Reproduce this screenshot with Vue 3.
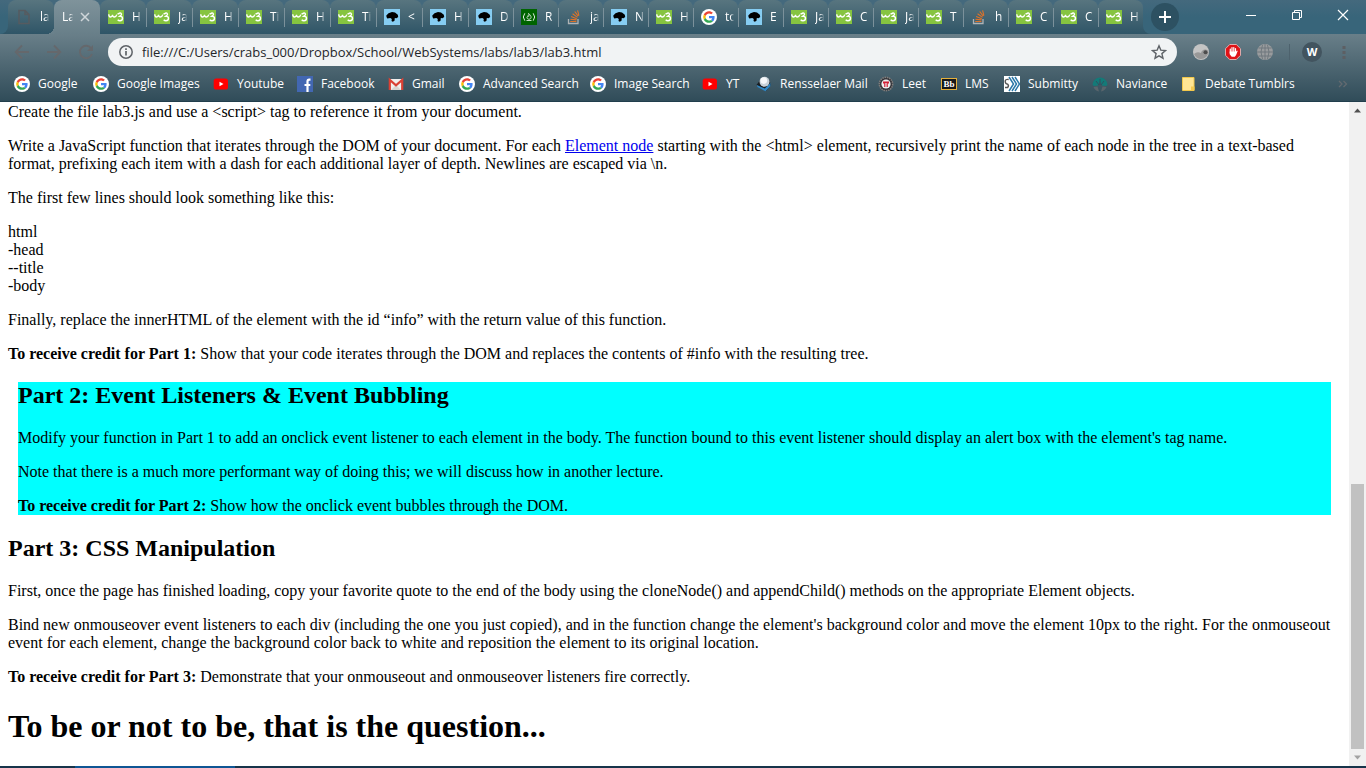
<script setup>
import { ref } from 'vue'

const url = ref('file:///C:/Users/crabs_000/Dropbox/School/WebSystems/labs/lab3/lab3.html')

const tabs = [
  { icon: 'file', title: 'la' },
  { icon: '', title: 'La', active: true },
  { icon: 'w3', title: 'H' },
  { icon: 'w3', title: 'Ja' },
  { icon: 'w3', title: 'H' },
  { icon: 'w3', title: 'Ti' },
  { icon: 'w3', title: 'H' },
  { icon: 'w3', title: 'Ti' },
  { icon: 'dino', title: '<' },
  { icon: 'dino', title: 'H' },
  { icon: 'dino', title: 'D' },
  { icon: 'fcc', title: 'R' },
  { icon: 'stack', title: 'ja' },
  { icon: 'dino', title: 'N' },
  { icon: 'w3', title: 'H' },
  { icon: 'google', title: 'to' },
  { icon: 'dino', title: 'E' },
  { icon: 'w3', title: 'Ja' },
  { icon: 'w3', title: 'C' },
  { icon: 'w3', title: 'Ja' },
  { icon: 'w3', title: 'T' },
  { icon: 'stack', title: 'h' },
  { icon: 'w3', title: 'C' },
  { icon: 'w3', title: 'C' },
  { icon: 'w3', title: 'H' }
]

const bookmarks = [
  { icon: 'google', label: 'Google', width: 79 },
  { icon: 'google', label: 'Google Images', width: 120 },
  { icon: 'youtube', label: 'Youtube', width: 84 },
  { icon: 'facebook', label: 'Facebook', width: 91 },
  { icon: 'gmail', label: 'Gmail', width: 71 },
  { icon: 'google', label: 'Advanced Search', width: 131 },
  { icon: 'google', label: 'Image Search', width: 112 },
  { icon: 'youtube', label: 'YT', width: 54 },
  { icon: 'mail', label: 'Rensselaer Mail', width: 122 },
  { icon: 'leet', label: 'Leet', width: 63 },
  { icon: 'lms', label: 'LMS', width: 63 },
  { icon: 'submitty', label: 'Submitty', width: 88 },
  { icon: 'naviance', label: 'Naviance', width: 89 },
  { icon: 'folder', label: 'Debate Tumblrs', width: 120 }
]
</script>

<template>
  <div class="window">
    <svg class="defs" aria-hidden="true">
      <symbol id="i-file" viewBox="0 0 16 16">
        <path d="M3 1.500h6l4 4v9H3zM9 1.500v4h4" fill="none" stroke="#565b60" stroke-width="1.500" />
      </symbol>
      <symbol id="i-w3" viewBox="0 0 16 16">
        <rect y="1" width="16" height="14" fill="#86c440" />
        <path d="M.8 5.300q0 2.700 1.700 2.700t2-2.200q.1 2.200 1.900 2.200T8.800 5.700" fill="none" stroke="#fff" stroke-width="1.300" />
        <path d="M9.500 4.800h1.200q1-1.200 2.200-.6Q14 5 13 6.200l-1.200 1q2.500-.2 2.700 1.900-.1 2.600-2.500 2.700-1.500 0-2.300-1" fill="none" stroke="#fff" stroke-width="1.400" />
      </symbol>
      <symbol id="i-dino" viewBox="0 0 16 16">
        <rect width="16" height="16" fill="#86cdf2" />
        <path d="M2.300 6.500 4.500 4.300 8 3l3 .5 2.800 2.200.4 2.300-1.700 1.300-1.700-.2-.3 2.700-1.700 1-1.300-.7.300-2-1.500-1-3 .3L2.500 8z" fill="#000" />
      </symbol>
      <symbol id="i-fcc" viewBox="0 0 16 16">
        <rect width="16" height="16" fill="#006400" />
        <path d="M3.800 4.300Q.8 8 3.800 11.700M12.200 4.300q3 3.700 0 7.400" fill="none" stroke="#dfeadf" />
        <path d="M7.500 4.500c2 1.500 2.700 2.700 2.500 4.200-.2 1-1 1.500-2 1.500s-2-.6-2-1.700c.1-.9.900-1.200.9-2l.9.900c.4-.9.200-1.800-.3-2.900M5.500 11.500h5" fill="none" stroke="#dfeadf" stroke-width=".9" />
      </symbol>
      <symbol id="i-stack" viewBox="0 0 16 16">
        <path d="M2.500 10v4.500h9.500V10" fill="none" stroke="#aeb3b6" stroke-width="1.300" />
        <path d="M4.200 12.500h6.200M4.400 10.200l6.100.7M5.100 7.600l5.700 2.100M6.600 4.700l4.900 3.700M8.700 2.500l3.500 4.700M11.600 1.300l1.300 5.300" stroke="#e07328" stroke-width="1.100" />
      </symbol>
      <symbol id="i-google" viewBox="0 0 48 48">
        <circle cx="24" cy="24" r="24" fill="#fff" />
        <g transform="translate(6.500 6.500) scale(.73)">
          <path fill="#EA4335" d="M24 9.500c3.540 0 6.710 1.220 9.210 3.600l6.850-6.850C35.900 2.380 30.470 0 24 0 14.620 0 6.510 5.380 2.560 13.220l7.980 6.190C12.430 13.720 17.740 9.500 24 9.500z" />
          <path fill="#4285F4" d="M46.980 24.550c0-1.570-.15-3.090-.38-4.550H24v9.020h12.940c-.58 2.960-2.260 5.480-4.780 7.180l7.730 6c4.510-4.180 7.090-10.360 7.090-17.650z" />
          <path fill="#FBBC05" d="M10.530 28.590A14.500 14.500 0 0 1 10.530 19.410l-7.980-6.190a24 24 0 0 0 0 21.560z" />
          <path fill="#34A853" d="M24 48c6.480 0 11.930-2.130 15.890-5.810l-7.730-6c-2.150 1.450-4.920 2.300-8.160 2.300-6.260 0-11.570-4.220-13.470-9.910l-7.980 6.190C6.510 42.620 14.620 48 24 48z" />
        </g>
      </symbol>
      <symbol id="i-youtube" viewBox="0 0 16 16">
        <rect x=".7" y="2.500" width="14.300" height="11" rx="2.600" fill="#f00" />
        <path d="m6.500 5.700 4 2.300-4 2.300z" fill="#fff" />
      </symbol>
      <symbol id="i-facebook" viewBox="0 0 16 16">
        <rect width="16" height="16" fill="#4267b2" />
        <path d="M13.500 3.700h-1.300q-1.700 0-1.700 1.800V16M7.500 9h5.800" fill="none" stroke="#fff" stroke-width="2.200" />
      </symbol>
      <symbol id="i-gmail" viewBox="0 0 16 16">
        <path d="M1 3h14v11H1z" fill="#f1efed" />
        <path d="M3 14l5-5 5 5z" fill="#d8d4d1" />
        <path d="M1.800 14V4L8 9.300 14.200 4v10" fill="none" stroke="#da4034" stroke-width="2.200" />
      </symbol>
      <symbol id="i-mail" viewBox="0 0 16 16">
        <path d="M.5 9 5 3l8 .5L15 9l-5 6z" fill="#1a1d20" />
        <path d="m.8 9 8 3.500L14.500 7v3L9.500 15.300 1.500 11z" fill="#3187c4" />
        <circle cx="8.500" cy="5.800" r="5" fill="#c9d2d9" />
        <circle cx="7.800" cy="4.600" r="3.300" fill="#f6f8fa" />
      </symbol>
      <symbol id="i-leet" viewBox="0 0 16 16">
        <circle cx="8" cy="8" r="6.700" fill="#35353a" stroke="#807d7b" stroke-width="1.500" stroke-dasharray="1.500 .8" />
        <circle cx="8" cy="8" r="4.600" fill="#eee" />
        <path d="M5 5.500h6v2H9.800V11H8.600V7H7.400v4H6.200V7.500H5z" fill="#d31f35" />
      </symbol>
      <symbol id="i-lms" viewBox="0 0 16 16">
        <rect x=".5" y="2.500" width="15" height="11" fill="#17191b" stroke="#e6b13c" />
        <text x="8" y="11.300" text-anchor="middle" font-family="Liberation Serif, serif" font-weight="bold" font-size="9" fill="#fff">Bb</text>
      </symbol>
      <symbol id="i-submitty" viewBox="0 0 16 16">
        <rect width="16" height="16" fill="#fff" />
        <path d="M4.700 3.500Q1 3 1.200 5.500t2.500 2.700q1.500 1.500 0 3.300H1" fill="none" stroke="#555" stroke-width="1.400" />
        <path d="m5 1 4.500 7L5 15M8 1l4.500 7L8 15M11 1l4.500 7-4.500 7" fill="none" stroke="#2b78a8" stroke-width="1.500" />
      </symbol>
      <symbol id="i-naviance" viewBox="0 0 16 16">
        <path d="M.5 9a7.500 7.500 0 1 1 15 0l-1.500 1-4-.5L8 5 6 9.500 2 10z" fill="#137a78" />
        <path d="M8 3v6M4 5l3 4M12 5 9 9" stroke="#2e5260" />
        <path d="m1.500 11 4-.5L7 15.500q-4-.8-5.500-4.500M14.500 11l-4-.5L9 15.500q4-.8 5.500-4.500" fill="#59656c" />
      </symbol>
      <symbol id="i-folder" viewBox="0 0 16 16">
        <path d="M1.500 1.500h11.500v13H1.500z" fill="#ffe694" stroke="#f2c84b" />
        <path d="M10 10.500h3.500v4H10z" fill="#f4ca4f" />
      </symbol>
    </svg>

    <header class="chrome">
      <div class="strip">
        <div class="edge-left"></div>
        <div class="tabs">
          <div v-for="(tab, i) in tabs" :key="i" class="tab" :class="{ active: tab.active, wide: i < 10, ruled: i > 2 }">
            <svg v-if="tab.icon" class="icon"><use :href="'#i-' + tab.icon" /></svg>
            <span class="title">{{ tab.title }}</span>
            <button v-if="tab.active" class="close" type="button" aria-label="Close tab">
              <svg viewBox="0 0 10 10"><path d="m1 1 8 8M9 1 1 9" stroke="#cfd6da" stroke-width="1.500" /></svg>
            </button>
          </div>
        </div>
        <div class="edge-right">
          <button class="new-tab" type="button" aria-label="New tab">
            <svg viewBox="0 0 28 28"><path d="M14 8v12M8 14h12" stroke="#fff" stroke-width="2" /></svg>
          </button>
          <div class="controls">
            <button type="button" aria-label="Minimize">
              <svg viewBox="0 0 12 12"><path d="M1 6.500h10" stroke="#fff" /></svg>
            </button>
            <button type="button" aria-label="Restore">
              <svg viewBox="0 0 12 12"><path d="M1.500 3.500h7v7h-7zM3.500 3.500v-2h7v7h-2" fill="none" stroke="#fff" /></svg>
            </button>
            <button type="button" aria-label="Close">
              <svg viewBox="0 0 12 12"><path d="m1 1 10 10M11 1 1 11" stroke="#fff" stroke-width="1.200" /></svg>
            </button>
          </div>
        </div>
      </div>

      <div class="lower">
        <div class="toolbar">
          <div class="nav">
            <button type="button" aria-label="Back">
              <svg viewBox="0 0 16 16"><path d="M15 8H2M8 1.500 1.700 8 8 14.500" fill="none" stroke="#65686c" stroke-width="1.900" /></svg>
            </button>
            <button type="button" aria-label="Forward">
              <svg viewBox="0 0 16 16"><path d="M1 8h13M8 1.500 14.300 8 8 14.500" fill="none" stroke="#65686c" stroke-width="1.900" /></svg>
            </button>
            <button type="button" aria-label="Reload">
              <svg viewBox="0 0 16 16"><path d="M13.300 4.500A6.200 6.200 0 1 0 14 10" fill="none" stroke="#65686c" stroke-width="1.900" /><path d="M15 1v6H9z" fill="#65686c" /></svg>
            </button>
          </div>
          <div class="omnibox">
            <svg class="icon" viewBox="0 0 16 16"><circle cx="8" cy="8" r="6.200" fill="none" stroke="#5f6368" stroke-width="1.500" /><path d="M8 7v4.500M8 4.300v1.600" stroke="#5f6368" stroke-width="1.700" /></svg>
            <input v-model="url" type="text" aria-label="Address" spellcheck="false" />
            <button type="button" aria-label="Bookmark this page">
              <svg viewBox="0 0 16 16"><path d="m8 1.800 1.800 4.300 4.700.4-3.600 3.100 1.100 4.600L8 11.800l-4 2.400 1.100-4.600-3.600-3.100 4.700-.4z" fill="none" stroke="#5f6368" stroke-width="1.400" /></svg>
            </button>
          </div>
          <div class="extensions">
            <button type="button" aria-label="Cloud extension">
              <svg viewBox="0 0 16 16"><circle cx="8" cy="8" r="8" fill="#c4c4c4" /><path d="M1 10q3-3 7-1 1-4 5-3.500 2.500.7 2.500 3Q14 15 8 15 3 15 1 10" fill="#989898" /><circle cx="12.500" cy="8.300" r="2" fill="#4c4c4c" /></svg>
            </button>
            <button type="button" aria-label="Ad blocker">
              <svg viewBox="0 0 16 16"><path d="M4.700.5h6.600l4.200 4.200v6.600l-4.200 4.200H4.700L.5 11.300V4.700z" fill="#e01217" stroke="#efc4c4" stroke-width=".8" /><path d="M5.300 9V5M7 8V3.500M8.800 8V3.500M10.500 9V4.500" stroke="#fff" stroke-width="1.200" stroke-linecap="round" /><path d="M4.700 7.500h6.400l.9-1 .7.600-1.600 3.900-1.300 1.800H6.700l-2-2.500z" fill="#fff" /></svg>
            </button>
            <button type="button" aria-label="Globe extension">
              <svg viewBox="0 0 16 16"><circle cx="8" cy="8" r="8" fill="#999c9e" /><path d="M8 0v16M0 8h16M1.500 4h13M1.500 12h13M5.500 1Q2.500 8 5.500 15M10.500 1q3 7 0 14" fill="none" stroke="#6b757b" stroke-width=".9" /></svg>
            </button>
          </div>
          <span class="divider"></span>
          <button class="profile" type="button">W</button>
          <button class="menu" type="button" aria-label="Menu">
            <svg viewBox="0 0 4 14"><path d="M.5 1h3v3h-3zM.5 6h3v3h-3zM.5 11h3v3h-3z" fill="#5d5f63" /></svg>
          </button>
        </div>

        <nav class="bookmarks">
          <a v-for="(b, i) in bookmarks" :key="i" href="#" :style="{ flexBasis: b.width + 'px' }">
            <svg class="icon"><use :href="'#i-' + b.icon" /></svg>
            <span>{{ b.label }}</span>
          </a>
          <button class="more" type="button" aria-label="More bookmarks">
            <svg viewBox="0 0 10 8"><path d="m1 1 3 3-3 3M5.500 1l3 3-3 3" fill="none" stroke="#626a70" stroke-width="1.300" /></svg>
          </button>
        </nav>
      </div>
    </header>

    <div class="view">
      <main class="page">
        <p>Create the file lab3.js and use a &lt;script&gt; tag to reference it from your document.</p>
        <p>Write a JavaScript function that iterates through the DOM of your document. For each <a href="#">Element node</a> starting with the &lt;html&gt; element, recursively print the name of each node in the tree in a text-based format, prefixing each item with a dash for each additional layer of depth. Newlines are escaped via \n.</p>
        <p>The first few lines should look something like this:</p>
        <p>html<br />-head<br />--title<br />-body</p>
        <p>Finally, replace the innerHTML of the element with the id “info” with the return value of this function.</p>
        <p><b>To receive credit for Part 1:</b> Show that your code iterates through the DOM and replaces the contents of #info with the resulting tree.</p>
        <section class="lit">
          <h2>Part 2: Event Listeners &amp; Event Bubbling</h2>
          <p>Modify your function in Part 1 to add an onclick event listener to each element in the body. The function bound to this event listener should display an alert box with the element's tag name.</p>
          <p>Note that there is a much more performant way of doing this; we will discuss how in another lecture.</p>
          <p><b>To receive credit for Part 2:</b> Show how the onclick event bubbles through the DOM.</p>
        </section>
        <section>
          <h2>Part 3: CSS Manipulation</h2>
          <p>First, once the page has finished loading, copy your favorite quote to the end of the body using the cloneNode() and appendChild() methods on the appropriate Element objects.</p>
          <p>Bind new onmouseover event listeners to each div (including the one you just copied), and in the function change the element's background color and move the element 10px to the right. For the onmouseout event for each element, change the background color back to white and reposition the element to its original location.</p>
          <p><b>To receive credit for Part 3:</b> Demonstrate that your onmouseout and onmouseover listeners fire correctly.</p>
        </section>
        <h1>To be or not to be, that is the question...</h1>
      </main>
      <div class="scrollbar" aria-hidden="true">
        <svg viewBox="0 0 17 17"><path d="M8.500 6.500 12 10.500H5z" fill="#505050" /></svg>
        <div class="track"><div class="thumb"></div></div>
        <svg viewBox="0 0 17 17"><path d="M5 6.500h7l-3.500 4z" fill="#a3a3a3" /></svg>
      </div>
    </div>
    <footer class="taskbar"><span></span></footer>
  </div>
</template>

<style>
body {
  margin: 0;
  overflow: hidden;
}
</style>

<style scoped>
.window {
  display: flex;
  flex-direction: column;
  height: 100vh;
  background: #fff;
}
.defs {
  position: absolute;
  width: 0;
  height: 0;
}
button {
  padding: 0;
  border: 0;
  background: none;
  display: flex;
  align-items: center;
  justify-content: center;
  flex: none;
}
.icon {
  width: 16px;
  height: 16px;
  flex: none;
}
.chrome {
  flex: none;
  font-family: "Open Sans", "Noto Sans", sans-serif;
  font-size: 12px;
  color: #fff;
}
.strip {
  display: flex;
  height: 34px;
  background: linear-gradient(#50717f, #2f5567);
}
.edge-left,
.edge-right {
  background: linear-gradient(#44697d, #38657a 50%, #38657a);
}
.edge-left {
  width: 8px;
  border-bottom-right-radius: 8px;
  flex: none;
}
.edge-right {
  display: flex;
  flex: 1;
  justify-content: space-between;
  padding-left: 8px;
  border-bottom-left-radius: 8px;
}
.tabs {
  display: flex;
  min-width: 0;
  background: #44697d;
}
.tab {
  display: flex;
  align-items: center;
  gap: 8px;
  flex: 0 1 auto;
  width: 45px;
  box-sizing: border-box;
  height: 34px;
  padding: 0 0 0 8px;
  min-width: 0;
  position: relative;
  border-radius: 8px 8px 0 0;
  background: linear-gradient(#58757f, #2f5567);
}
.tab.wide {
  width: 46px;
}
.tab.ruled::before {
  content: "";
  position: absolute;
  left: 0;
  top: 8px;
  width: 1px;
  height: 19px;
  background: #7b919b;
}
.tab.active {
  background: linear-gradient(#7f939b, #687f89);
}
.tab.active::before,
.tab.active::after {
  content: "";
  position: absolute;
  bottom: 0;
  width: 8px;
  height: 8px;
}
.tab.active::before {
  left: -8px;
  background: radial-gradient(circle at 0 0, transparent 8px, #6a818b 8px);
}
.tab.active::after {
  right: -8px;
  background: radial-gradient(circle at 100% 0, transparent 8px, #6a818b 8px);
}
.title {
  flex: 0 0 14px;
  white-space: nowrap;
  line-height: 16px;
  mask-image: linear-gradient(90deg, #000 40%, transparent 65%);
}
.tab.active .title {
  mask-image: linear-gradient(90deg, #000 60%, transparent 80%);
}
.tab.active {
  gap: 4px;
}
.close svg {
  width: 10px;
  height: 10px;
}
.new-tab {
  width: 28px;
  height: 28px;
  margin-top: 3px;
  border-radius: 50%;
  background: #2d5162;
}
.new-tab svg {
  width: 28px;
  height: 28px;
}
.controls {
  display: flex;
  height: 29px;
}
.controls button {
  width: 46px;
}
.controls svg {
  width: 12px;
  height: 12px;
}
.lower {
  border-bottom: 1px solid #213e4c;
  background: linear-gradient(#697f89, #304c59);
}
.toolbar {
  display: flex;
  align-items: center;
  height: 36px;
  padding-right: 20px;
}
.nav {
  display: flex;
  gap: 16px;
  padding: 0 14px;
}
.nav svg,
.extensions svg,
.omnibox svg {
  width: 16px;
  height: 16px;
}
.omnibox {
  display: flex;
  align-items: center;
  gap: 8px;
  flex: 1;
  height: 28px;
  padding: 0 10px;
  border-radius: 14px;
  background: #f1f3f4;
}
.omnibox input {
  flex: 1;
  min-width: 0;
  padding: 0;
  border: 0;
  outline: 0;
  background: none;
  font: 13px/20px "Open Sans", "Noto Sans", sans-serif;
  color: #24262a;
}
.extensions {
  display: flex;
  gap: 16px;
  margin-left: 16px;
}
.divider {
  width: 1px;
  height: 16px;
  margin: 0 12px 0 16px;
  background: #4d626d;
}
.profile {
  width: 20px;
  height: 20px;
  border-radius: 50%;
  background: #42545f;
  color: #fff;
  font: bold 11px/20px "Open Sans", sans-serif;
}
.menu {
  margin-left: 20px;
}
.menu svg {
  width: 4px;
  height: 14px;
}
.bookmarks {
  display: flex;
  align-items: center;
  height: 28px;
  padding: 0 18px 3px 14px;
}
.bookmarks a {
  display: flex;
  align-items: center;
  gap: 8px;
  flex: 0 1 auto;
  color: #fff;
  text-decoration: none;
  white-space: nowrap;
  line-height: 16px;
}
.more {
  margin-left: auto;
}
.more svg {
  width: 10px;
  height: 8px;
}
.view {
  display: flex;
  flex: 1;
  min-height: 0;
}
.page {
  flex: 1;
  min-width: 0;
  overflow: hidden;
  padding: 1px 8px 0;
  font: 16px/18px "Liberation Serif", "Times New Roman", serif;
  color: #000;
}
.page p {
  margin: 0 0 16px;
}
.page a {
  color: #00e;
}
.page h2 {
  margin: 20px 0;
  font-size: 24px;
  line-height: 27px;
}
.page h1 {
  margin: 22px 0;
  font-size: 32px;
  line-height: 37px;
}
.lit {
  margin: 19px 10px 20px;
  background: #0ff;
}
.page .lit h2 {
  margin-top: 0;
}
.page .lit p:last-child {
  margin-bottom: 0;
}
.scrollbar {
  display: flex;
  flex-direction: column;
  width: 17px;
  flex: none;
  background: #f1f1f1;
}
.scrollbar svg {
  width: 17px;
  height: 17px;
  flex: none;
}
.track {
  display: flex;
  flex-direction: column;
  justify-content: flex-end;
  flex: 1;
  padding: 0 2px;
}
.thumb {
  height: 42%;
  background: #c1c1c1;
}
.taskbar {
  height: 2px;
  flex: none;
  padding-left: 75px;
  background: #17344a;
}
.taskbar span {
  display: block;
  width: 160px;
  height: 2px;
  background: #0f5694;
}
</style>
